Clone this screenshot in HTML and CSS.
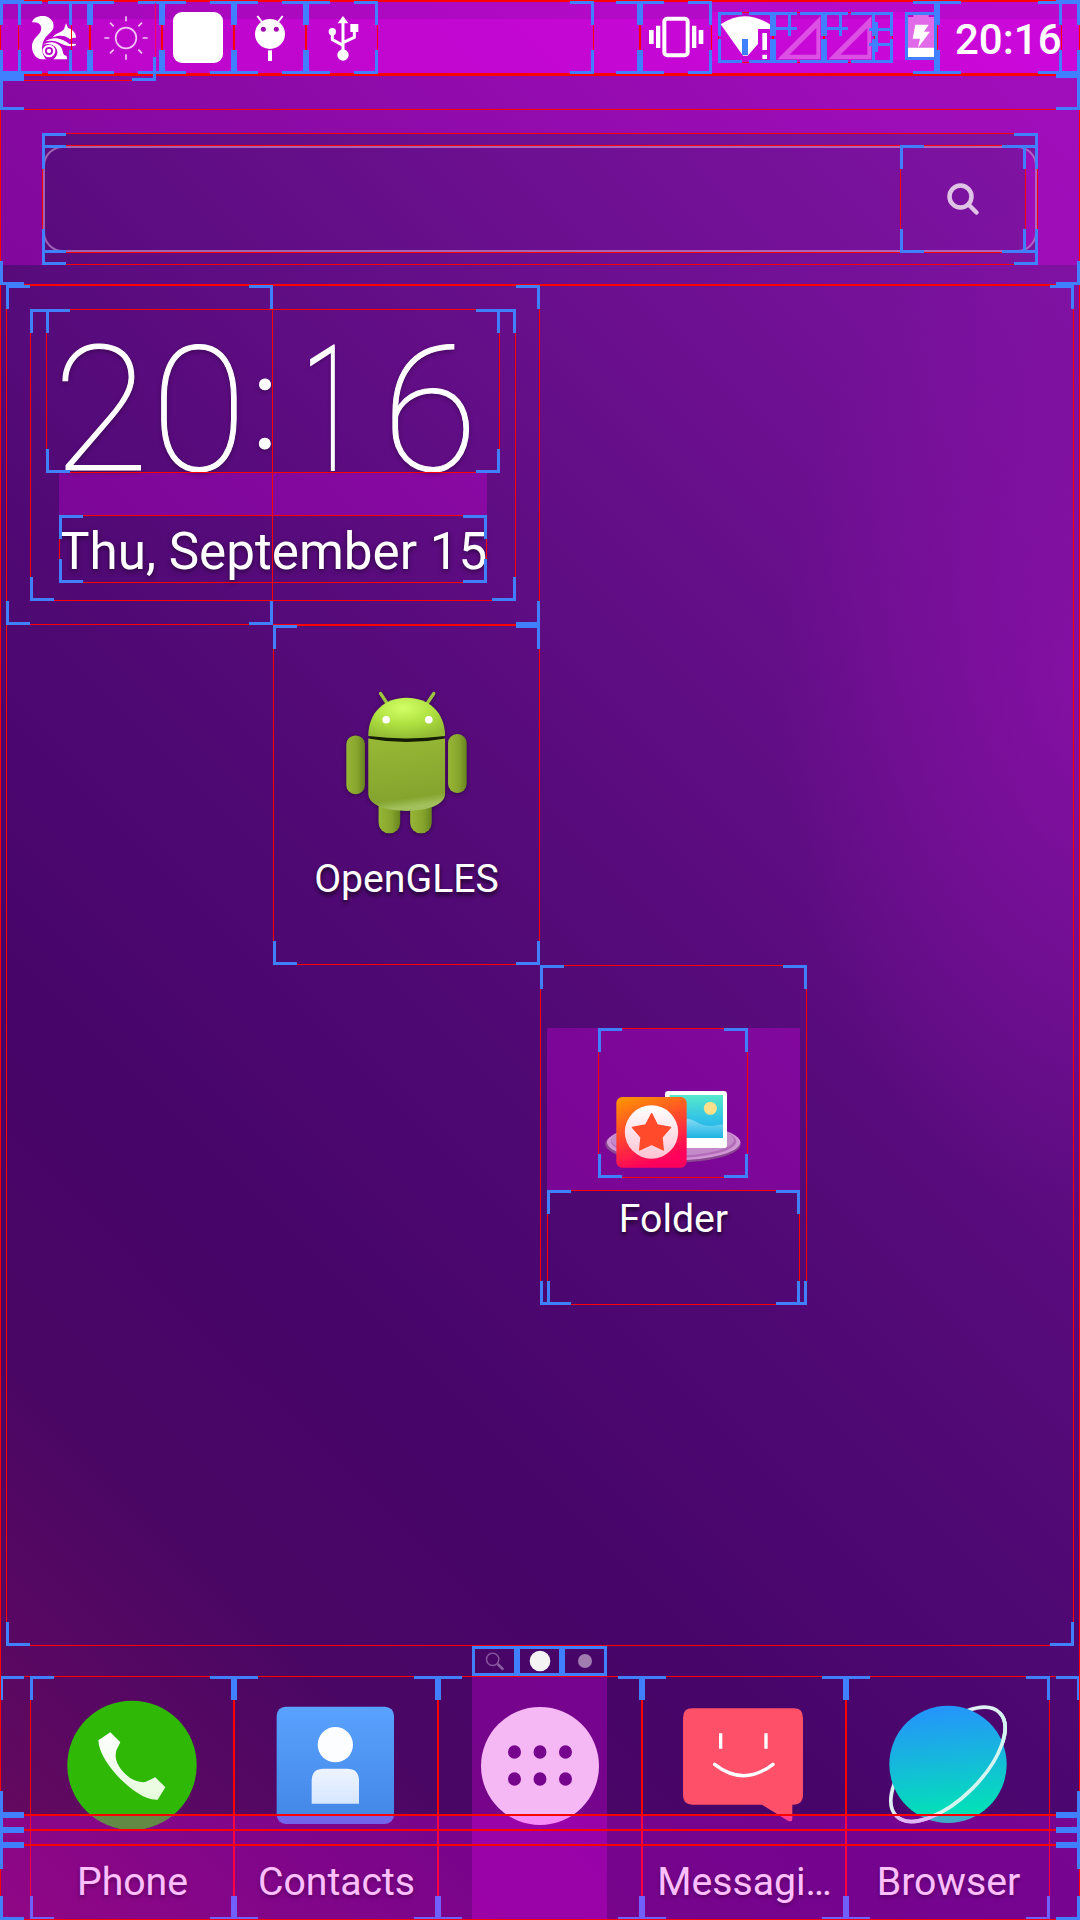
FILE: index.html
```html
<!DOCTYPE html>
<html lang="en">
<head>
<meta charset="utf-8">
<title>Home screen</title>
<link rel="stylesheet" href="styles.css">
</head>
<body>
<main class="screen">
  <header class="status">
    <div class="status-icons">
      <svg class="status-icon" viewBox="12 0 216 225">
        <g fill="#fff">
          <path d="M54 67C58 52 74 46 91 48C110 51 122 66 118 84C114 98 99 104 92 116C82 132 80 158 96 178H82C64 174 54 158 54 140C54 116 74 108 80 94C86 80 78 64 54 67Z"/>
          <path d="M116 112C126 98 140 99 150 88L156 70L162 84C175 88 186 98 186 113C178 113 176 112 169 118C152 104 132 106 116 112Z"/>
          <path d="M94 124C120 106 148 118 166 132L186 131V136C166 142 156 136 142 131C126 122 112 120 94 124Z"/>
          <path d="M86 135C108 120 134 128 143 145C149 158 145 166 158 168L159 178H118C134 166 134 148 120 138C108 131 96 131 86 135Z"/>
          <circle cx="105" cy="153" r="6.500"/>
        </g>
        <circle cx="105" cy="153" r="15.500" fill="none" stroke="#fff" stroke-width="7"/>
      </svg>
      <svg class="status-icon" viewBox="270 0 216 225">
        <g fill="none" stroke="#f3c4f7" stroke-width="5">
          <circle cx="378" cy="114" r="31"/>
          <path d="M378 49V64M378 163V179M313 114H328M428 114H443M330 68L341 79M415 149L426 160M330 160L341 149M415 79L426 68"/>
        </g>
      </svg>
      <svg class="status-icon" viewBox="486 0 216 225"><rect x="519" y="36" width="150" height="153" rx="27" fill="#fff"/></svg>
      <svg class="status-icon" viewBox="702 0 216 225">
        <circle cx="810" cy="102" r="45" fill="#fff"/>
        <path d="M772 48L786 66M848 48L834 66" stroke="#fff" stroke-width="6"/>
        <rect x="804" y="151" width="12" height="32" fill="#fff"/>
        <circle cx="790" cy="88" r="7.500" fill="#a208b0"/><circle cx="829" cy="88" r="7.500" fill="#a208b0"/>
      </svg>
      <svg class="status-icon" viewBox="918 0 216 225">
        <g fill="#fff"><path d="M1029 48L1045 70H1013Z"/><circle cx="1029" cy="165" r="17"/><circle cx="997" cy="95" r="11"/><rect x="1051" y="72" width="24" height="24"/></g>
        <path d="M1029 66V160M997 100V119L1029 136M1063 92V112L1029 128" fill="none" stroke="#fff" stroke-width="9"/>
      </svg>
    </div>
    <div class="status-system">
      <svg class="status-glyphs" viewBox="180 0 891 225">
        <g fill="none" stroke="#fff">
          <rect x="253" y="56" width="70" height="110" rx="9" stroke-width="12"/>
        </g>
        <path d="M207 90h14v42h-14zM228 77h13v67h-13zM336 77h13v67h-13zM356 90h14v42h-14z" fill="#fff"/>
        <path d="M396 36h18v147h-18zM939 36h36v144h-36z" fill="rgba(255,0,255,.25)"/>
        <path d="M422 73Q494 24 570 73V87H534V132L503 167H489Z" fill="#fff"/>
        <path d="M547 99h14v51h-14zM547 164h14v13h-14z" fill="#fff"/>
        <path d="M592 178L721 49V178ZM628 164H709V84ZM745 178L874 49V178ZM781 164H862V84Z" fill="#dc50e3" fill-rule="evenodd"/>
        <path d="M984 51h16v-6h46v6h16v94h-78z" fill="#e06ae8"/>
        <path d="M984 143h78v28h-78zM1006 74H1046L1032 95H1050L1014 143L1020 116H998Z" fill="#fff"/>
      </svg>
      <time class="status-time">20:16</time>
    </div>
  </header>

  <section class="search-area">
    <div class="search-frame">
      <div class="search-field">
        <button class="search-button" aria-label="Search">
          <svg viewBox="0 0 34 34"><circle cx="14.500" cy="14.500" r="11" fill="none" stroke="currentColor" stroke-width="4.500"/><path d="M22.500 22.500L30.500 30.500" stroke="currentColor" stroke-width="4.500" stroke-linecap="round"/></svg>
        </button>
        <span class="search-edge"></span>
      </div>
    </div>
  </section>

  <section class="workspace">
    <div class="clock-widget">
      <time class="clock"><span>2</span><span>0</span><span class="colon">:</span><span class="one">1</span><span>6</span></time>
      <div class="clock-gap"></div>
      <div class="date">Thu, September 15</div>
    </div>

    <a class="app app-opengles">
      <svg class="android" viewBox="240 200 400 450">
        <defs>
          <radialGradient id="head" cx=".45" cy=".25" r=".75"><stop offset="0" stop-color="#d2ff66"/><stop offset=".55" stop-color="#aee040"/><stop offset="1" stop-color="#93bc34"/></radialGradient>
          <linearGradient id="torso" x2=".15" y2="1"><stop offset="0" stop-color="#98b836"/><stop offset=".88" stop-color="#84a42e"/><stop offset="1" stop-color="#a2c05c"/></linearGradient>
          <linearGradient id="limb" x2="1"><stop offset="0" stop-color="#96b636"/><stop offset=".6" stop-color="#86a42c"/><stop offset="1" stop-color="#66841e"/></linearGradient>
        </defs>
        <path d="M362 219L382 249M522 219L502 249" stroke="#9cc440" stroke-width="10" stroke-linecap="round"/>
        <rect x="356" y="530" width="65" height="109" rx="31" fill="url(#limb)"/>
        <rect x="451" y="530" width="65" height="109" rx="31" fill="url(#limb)"/>
        <rect x="259" y="345" width="56" height="177" rx="27" fill="url(#limb)"/>
        <rect x="565" y="341" width="56" height="177" rx="27" fill="url(#limb)"/>
        <path d="M330 345H552V362Q440 374 330 362Z" fill="#141c02"/>
        <path d="M325 354Q440 376 556 354V520C556 556 500 572 440 572C380 572 325 556 325 520Z" fill="url(#torso)"/>
        <path d="M325 347C325 275 375 232 440 232C506 232 556 275 556 347Q440 362 325 347Z" fill="url(#head)"/>
        <circle cx="379" cy="298" r="11.500" fill="#fff"/><circle cx="507" cy="298" r="11.500" fill="#fff"/>
      </svg>
      <span class="label">OpenGLES</span>
    </a>

    <a class="app app-folder">
      <span class="folder-preview">
        <svg viewBox="204 234 450 450">
          <defs>
            <linearGradient id="store" x2=".35" y2="1"><stop offset="0" stop-color="#ff9800"/><stop offset=".5" stop-color="#ff4a2c"/><stop offset="1" stop-color="#ff005c"/></linearGradient>
            <linearGradient id="sky" x2="0" y2="1"><stop offset="0" stop-color="#56e8cc"/><stop offset=".6" stop-color="#30c0e8"/><stop offset="1" stop-color="#18b0e0"/></linearGradient>
            <linearGradient id="disc" x2="0" y2="1"><stop offset="0" stop-color="#fff"/><stop offset="1" stop-color="#ffc4d4"/></linearGradient>
            <linearGradient id="wave" x2="0" y2="1"><stop offset="0" stop-color="#86dcf4"/><stop offset="1" stop-color="#1cb2e2"/></linearGradient>
          </defs>
          <ellipse cx="429" cy="582" rx="203" ry="56" fill="#8a4a90"/>
          <ellipse cx="431" cy="577" rx="200" ry="54" fill="#d296d6"/>
          <ellipse cx="431" cy="574" rx="188" ry="50" fill="#b26cb8"/>
          <ellipse cx="428" cy="570" rx="184" ry="47" fill="#c48aca"/>
          <rect x="405" y="423" width="186" height="171" rx="10" fill="#fff"/>
          <path d="M419 435H579V564H419Z" fill="url(#sky)"/>
          <path d="M419 516C475 490 500 520 522 526C545 530 560 526 579 523V564H419Z" fill="url(#wave)"/>
          <circle cx="541" cy="475" r="19.500" fill="#ffe08a"/>
          <rect x="259" y="441" width="211" height="212" rx="18" fill="url(#store)"/>
          <circle cx="364.500" cy="546" r="80" fill="url(#disc)"/>
          <path d="M365 491L382 525L422 532L396 562L400 600L365 583L329 600L333 562L307 532L347 525Z" fill="#ff4a2c" stroke="#ff4a2c" stroke-width="4" stroke-linejoin="round"/>
        </svg>
      </span>
      <span class="label">Folder</span>
    </a>
  </section>

  <nav class="pages">
    <svg viewBox="0 0 405 90">
      <g stroke="#8a5ca0" fill="none"><circle cx="62" cy="40" r="18.500" stroke-width="4"/><path d="M77 54L94 71" stroke-width="8"/></g>
      <circle cx="204" cy="45" r="31" fill="#f4f4f4"/><circle cx="339" cy="45" r="21" fill="#a07cb0"/>
    </svg>
  </nav>

  <footer class="dock">
    <a class="dock-item">
      <svg viewBox="90 168 612 480">
        <defs><linearGradient id="receiver" x2="0" y2="1"><stop offset="0" stop-color="#fff"/><stop offset="1" stop-color="#e6fbdc"/></linearGradient></defs>
        <circle cx="396" cy="436" r="194" fill="#2fb906"/>
        <path d="M331 337L361 367L349 391C344 412 348 428 364 449C384 474 410 489 436 486L466 472L496 502L473 539C436 541 395 510 362 478C325 440 296 396 295 361Z" fill="url(#receiver)"/>
      </svg>
      <span class="label">Phone</span>
    </a>
    <a class="dock-item">
      <svg viewBox="702 168 612 480">
        <defs>
          <linearGradient id="card" x2="0" y2="1"><stop offset="0" stop-color="#5aa2ff"/><stop offset="1" stop-color="#4286e4"/></linearGradient>
          <linearGradient id="bust" x2="0" y2="1"><stop offset="0" stop-color="#eef4ff"/><stop offset="1" stop-color="#d6e6ff"/></linearGradient>
        </defs>
        <rect x="830" y="260" width="352" height="352" rx="27" fill="url(#card)"/>
        <circle cx="1006" cy="374" r="53" fill="#fcfdff"/>
        <path d="M935 551V482Q935 446 971 446H1041Q1077 446 1077 482V551Z" fill="url(#bust)"/>
      </svg>
      <span class="label">Contacts</span>
    </a>
    <a class="dock-item">
      <span class="drawer-tint"></span>
      <svg viewBox="24 168 612 480">
        <path fill="#f5b8f5" fill-rule="evenodd" d="M153 438a177 177 0 1 0 354 0a177 177 0 1 0-354 0ZM234 396a19.500 20 0 1 0 39 0a19.500 20 0 1 0-39 0ZM310.500 396a19.500 20 0 1 0 39 0a19.500 20 0 1 0-39 0ZM387 396a19.500 20 0 1 0 39 0a19.500 20 0 1 0-39 0ZM234 477a19.500 20 0 1 0 39 0a19.500 20 0 1 0-39 0ZM310.500 477a19.500 20 0 1 0 39 0a19.500 20 0 1 0-39 0ZM387 477a19.500 20 0 1 0 39 0a19.500 20 0 1 0-39 0Z"/>
      </svg>
    </a>
    <a class="dock-item">
      <svg viewBox="36 168 612 480">
        <path d="M187 265H491Q519 265 519 293V526Q519 554 491 554H487V596Q487 608 474 602L396 554H187Q159 554 159 526V293Q159 265 187 265Z" fill="#ff506a"/>
        <path d="M272 340V386M408 340V386" stroke="#fff" stroke-width="10"/>
        <path d="M254 433Q341 501 429 433" fill="none" stroke="#fff" stroke-width="10" stroke-linecap="round"/>
      </svg>
      <span class="label">Messagi…</span>
    </a>
    <a class="dock-item">
      <svg viewBox="648 168 612 480">
        <defs><linearGradient id="planet" x2=".1" y2="1"><stop offset="0" stop-color="#2690ff"/><stop offset=".5" stop-color="#16b8dc"/><stop offset="1" stop-color="#00e4b4"/></linearGradient></defs>
        <ellipse cx="954" cy="433" rx="219" ry="103" transform="rotate(-45 954 433)" fill="none" stroke="#def0f4" stroke-width="11"/>
        <circle cx="954" cy="433" r="176" fill="url(#planet)"/>
        <path d="M735 433A219 103 0 0 0 1173 433" transform="rotate(-45 954 433)" fill="none" stroke="#d4f4f0" stroke-width="11"/>
      </svg>
      <span class="label">Browser</span>
    </a>
  </footer>

  <svg class="bounds" id="bounds-lower" viewBox="0 0 1080 1920"></svg>
  <div class="nav-tint"></div>
  <svg class="bounds" id="bounds-upper" viewBox="0 0 1080 1920">
    <path fill="#4080ff" d="M742 39h6v16h-6zM788 15h3v21h-3zM776 27h21v3h-21zM839 15h3v21h-3zM827 27h21v3h-21zM875 22h3v30h-3zM869 28h23v3h-23zM869 43h23v3h-23z"/>
    <path fill="#ff0060" d="M155 3h1v54h-1z"/>
  </svg>
</main>
<script src="bounds.js"></script>
</body>
</html>
```
FILE: styles.css
```css
* { box-sizing: border-box; }

:root { --tint: rgba(255, 0, 255, .25); }

body {
  margin: 0;
  background: #48066c;
  font-family: Roboto, "Liberation Sans", sans-serif;
  color: #fff;
}

svg { display: block; }

.screen {
  position: relative;
  display: flex;
  flex-direction: column;
  width: 1080px;
  height: 1920px;
  overflow: hidden;
  background:
    radial-gradient(310px 520px at 1090px 690px, rgba(144, 16, 172, .65), rgba(144, 16, 172, 0)),
    linear-gradient(45deg, #6a0a5c 0%, #5a0862 9%, #4a0664 19%, #47056a 32%, #520a76 50%, #640e88 68%, #7c12a0 90%, #8412a6 100%);
}

.status {
  display: flex;
  justify-content: space-between;
  height: 75px;
  padding-left: 18px;
  background: linear-gradient(rgba(255, 0, 255, .44) 19px, rgba(255, 0, 255, .58) 19px);
}
.status-icons, .status-system { display: flex; }
.status-icon { width: 72px; height: 75px; }
.status-glyphs { width: 297px; height: 75px; }
.status-time {
  width: 143px;
  padding-left: 18px;
  font-size: 42px;
  font-weight: 500;
  line-height: 79px;
  white-space: nowrap;
}

.search-area {
  height: 190px;
  padding: 58px 42px 0;
  margin-bottom: 20px;
  overflow: hidden;
}
.search-frame {
  height: 132px;
  padding: 13px 1px;
  box-shadow: 0 0 0 80px var(--tint);
}
.search-field {
  display: flex;
  justify-content: flex-end;
  height: 106px;
  border: 2px solid rgba(215, 170, 220, .55);
  border-radius: 20px;
  overflow: hidden;
}
.search-button {
  display: grid;
  place-items: center;
  width: 126px;
  padding: 0;
  border: 0;
  background: none;
  color: #dfc3e5;
}
.search-button svg { width: 34px; height: 34px; }
.search-edge { width: 9px; background: var(--tint); }

.workspace {
  display: grid;
  grid-template: repeat(4, 340px) / repeat(4, 267px);
  height: 1361px;
  padding-left: 6px;
}

.clock-widget {
  grid-area: 1 / 1 / 2 / 3;
  padding: 24px 53px 24px;
}
.clock {
  display: grid;
  grid-template-columns: 84px 112px 20px 97px 116px;
  height: 164px;
  font-size: 175px;
  font-weight: 100;
  line-height: 204px;
  text-shadow: 0 2px 5px rgba(0, 0, 0, .35);
}
.clock span {
  display: flex;
  justify-content: center;
  -webkit-text-stroke: 1px #fff;
}
.clock .one {
  transform: scaleX(.58);
  transform-origin: 62px 50%;
  -webkit-text-stroke-width: 2px;
}
.clock .colon {
  font-size: 131px;
  font-weight: 300;
  transform: translateY(-8px);
}
.clock-gap { width: 428px; height: 42px; background: var(--tint); }
.date {
  width: 428px;
  height: 68px;
  font-size: 51.200px;
  line-height: 74px;
  text-align: center;
  white-space: nowrap;
  text-shadow: 0 2px 5px rgba(0, 0, 0, .5);
}

.app {
  display: flex;
  flex-direction: column;
  align-items: center;
}
.app-opengles { grid-area: 2 / 2; padding-top: 62px; }
.app-opengles .label { margin-top: 17px; }
.app-folder { grid-area: 3 / 3; padding-top: 63px; }
.app-folder .label { line-height: 59px; }
.android { width: 133px; height: 150px; filter: drop-shadow(0 1px 2px rgba(0, 0, 0, .4)); }
.folder-preview {
  display: flex;
  justify-content: center;
  width: 253px;
  height: 162px;
  padding-right: 2px;
  background: var(--tint);
}
.folder-preview svg { width: 150px; height: 150px; }

.label {
  font-size: 39.200px;
  line-height: 50px;
  text-shadow: 0 3px 4px rgba(0, 0, 0, .7);
}

.pages { display: flex; justify-content: center; height: 30px; padding-right: 2px; }
.pages svg { width: 135px; height: 30px; }

.dock {
  display: grid;
  grid-template-columns: repeat(5, 204px);
  height: 244px;
  padding: 0 30px;
}
.dock-item {
  position: relative;
  display: flex;
  flex-direction: column;
  align-items: center;
  gap: 20px;
}
.dock-item svg { position: relative; width: 204px; height: 160px; }
.dock-item .label { padding-left: 1px; line-height: 53px; text-shadow: 0 2px 4px rgba(0, 0, 0, .6); }
.drawer-tint {
  position: absolute;
  inset: 0 35px 0 34px;
  background: var(--tint);
}

.nav-tint {
  position: absolute;
  inset: 1814px 0 0;
  background: var(--tint);
}
.bounds {
  position: absolute;
  inset: 0;
  width: 1080px;
  height: 1920px;
  pointer-events: none;
}
```
FILE: bounds.js
```js
// Layout bounds: [left, top, right, bottom] of each view; "ends" draws the lower end only.
const lower = [
  [0, 1676, 1080, 1920],
  [30, 1676, 234, 1920], [234, 1676, 438, 1920], [438, 1676, 642, 1920],
  [642, 1676, 846, 1920], [846, 1676, 1050, 1920]
];
const upper = [
  [0, 0, 1080, 75], [0, 75, 1080, 1920], [0, 75, 1080, 110],
  [0, 20, 156, 81, "ends"], [0, 75, 1080, 285],
  [0, 1, 72, 74], [18, 1, 90, 74], [90, 1, 162, 74], [162, 1, 234, 74], [234, 1, 306, 74], [306, 1, 378, 74],
  [0, 1, 594, 74], [0, 1, 640, 74], [640, 1, 712, 74],
  [718, 12, 893, 63], [718, 12, 773, 63], [773, 12, 824, 63], [824, 12, 875, 63],
  [905, 12, 937, 60], [640, 1, 937, 74], [937, 1, 1062, 74], [937, 1, 1080, 74],
  [42, 133, 1038, 265], [42, 145, 1038, 253], [900, 145, 1026, 253],
  [6, 285, 1074, 1646], [6, 285, 540, 625], [6, 285, 273, 625],
  [30, 309, 516, 601], [46, 309, 500, 473], [59, 515, 487, 583],
  [273, 625, 540, 965], [540, 965, 807, 1305],
  [598, 1028, 748, 1178], [547, 1190, 800, 1305],
  [472, 1646, 607, 1676], [472, 1646, 517, 1676], [517, 1646, 562, 1676], [562, 1646, 607, 1676],
  [0, 1770, 1080, 1815, "ends"], [0, 1815, 1080, 1830], [0, 1830, 1080, 1845], [0, 1845, 1080, 1920]
];

function add(svg, attrs) {
  const path = document.createElementNS("http://www.w3.org/2000/svg", "path");
  for (const name in attrs) path.setAttribute(name, attrs[name]);
  svg.prepend(path);
}

function draw(id, boxes) {
  let edges = "";
  let corners = "";
  for (const [l, t, r, b, ends] of boxes) {
    const x = Math.min(24, r - l);
    const y = Math.min(24, b - t);
    edges += ends
      ? `M${l} ${b - 1}h${r - l}v1H${l}z`
      : `M${l} ${t}h${r - l}v1H${l}zM${l} ${b - 1}h${r - l}v1H${l}zM${l} ${t}h1V${b}h-1zM${r - 1} ${t}h1V${b}h-1z`;
    const tops = ends ? [[b - 3, b - y]] : [[t, t], [b - 3, b - y]];
    for (const [h, v] of tops) {
      corners += `M${l} ${h}h${x}v3h${-x}zM${r - x} ${h}h${x}v3h${-x}z`;
      corners += `M${l} ${v}h3v${y}h-3zM${r - 3} ${v}h3v${y}h-3z`;
    }
  }
  const svg = document.getElementById(id);
  add(svg, { d: corners, fill: "#4080ff" });
  add(svg, { d: edges, fill: "#ff0000" });
}

draw("bounds-lower", lower);
draw("bounds-upper", upper);
```
